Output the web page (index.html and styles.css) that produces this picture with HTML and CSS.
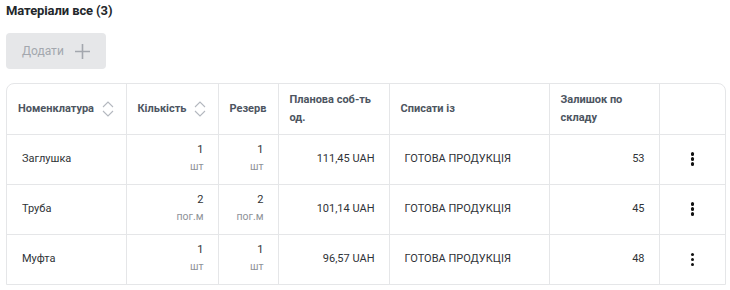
FILE: index.html
```html
<!DOCTYPE html>
<html lang="uk">
<head>
<meta charset="utf-8">
<link rel="stylesheet" href="styles.css">
</head>
<body>
<div class="page">
  <h2 class="title">Матеріали все (3)</h2>
  <button class="add-btn" disabled>
    <span>Додати</span>
    <svg width="17" height="17" viewBox="0 0 17 17"><path d="M8.5 1v15M1 8.5h15" stroke="#a3a7ae" stroke-width="1.6" fill="none"/></svg>
  </button>
  <div class="table-wrap">
    <table class="tbl">
      <colgroup>
        <col class="c1"><col class="c2"><col class="c3"><col class="c4"><col class="c5"><col class="c6"><col class="c7">
      </colgroup>
      <thead>
        <tr>
          <th><div class="th-sort">Номенклатура <svg class="sort" width="12" height="18" viewBox="0 0 12 18"><path d="M1 7l5-5 5 5M1 11l5 5 5-5" stroke="#b4b8bf" stroke-width="1.1" fill="none"/></svg></div></th>
          <th><div class="th-sort">Кількість <svg class="sort" width="12" height="18" viewBox="0 0 12 18"><path d="M1 7l5-5 5 5M1 11l5 5 5-5" stroke="#b4b8bf" stroke-width="1.1" fill="none"/></svg></div></th>
          <th>Резерв</th>
          <th>Планова соб-ть од.</th>
          <th>Списати із</th>
          <th>Залишок по складу</th>
          <th></th>
        </tr>
      </thead>
      <tbody>
        <tr>
          <td>Заглушка</td>
          <td class="num"><div>1</div><div class="unit">шт</div></td>
          <td class="num"><div>1</div><div class="unit">шт</div></td>
          <td class="num">111,45 UAH</td>
          <td class="src">ГОТОВА ПРОДУКЦІЯ</td>
          <td class="num">53</td>
          <td class="act"><span class="kebab"><i></i><i></i><i></i></span></td>
        </tr>
        <tr>
          <td>Труба</td>
          <td class="num"><div>2</div><div class="unit">пог.м</div></td>
          <td class="num"><div>2</div><div class="unit">пог.м</div></td>
          <td class="num">101,14 UAH</td>
          <td class="src">ГОТОВА ПРОДУКЦІЯ</td>
          <td class="num">45</td>
          <td class="act"><span class="kebab"><i></i><i></i><i></i></span></td>
        </tr>
        <tr>
          <td>Муфта</td>
          <td class="num"><div>1</div><div class="unit">шт</div></td>
          <td class="num"><div>1</div><div class="unit">шт</div></td>
          <td class="num">96,57 UAH</td>
          <td class="src">ГОТОВА ПРОДУКЦІЯ</td>
          <td class="num">48</td>
          <td class="act"><span class="kebab"><i></i><i></i><i></i></span></td>
        </tr>
      </tbody>
    </table>
  </div>
</div>
</body>
</html>
```
FILE: styles.css
```css
* { box-sizing: border-box; }
body {
  margin: 0;
  font-family: Roboto, "Noto Sans", sans-serif;
  color: #2b2f33;
  background: #fff;
}
.page {
  padding: 0 6px;
}
.title {
  margin: 0;
  font-size: 13px;
  font-weight: 700;
  line-height: 21px;
  color: #23272b;
  letter-spacing: -0.1px;
}
.add-btn {
  margin-top: 12px;
  width: 100px;
  height: 36px;
  border: none;
  border-radius: 4px;
  background: #e6e7e9;
  display: flex;
  align-items: center;
  padding: 0 0 0 16px;
  gap: 10px;
  font-family: inherit;
  font-size: 12px;
  color: #a3a7ae;
}
.table-wrap {
  margin-top: 14px;
  width: 720px;
  border: 1px solid #e5e6e8;
  border-radius: 8px 8px 0 0;
  overflow: hidden;
}
.tbl {
  width: 100%;
  border-collapse: collapse;
  table-layout: fixed;
  font-size: 11px;
}
.c1 { width: 119px; }
.c2 { width: 92px; }
.c3 { width: 60px; }
.c4 { width: 111px; }
.c5 { width: 160px; }
.c6 { width: 110px; }
.c7 { width: 66px; }
.tbl th, .tbl td {
  border-right: 1px solid #e5e6e8;
  border-bottom: 1px solid #e5e6e8;
}
.tbl tr > :last-child { border-right: none; }
.tbl tbody tr:last-child td { border-bottom: none; }
.tbl th {
  height: 50px;
  padding: 0 4px 0 11px;
  text-align: left;
  font-weight: 700;
  color: #4d5561;
  line-height: 18px;
}
.th-sort {
  display: flex;
  align-items: center;
  gap: 8px;
  white-space: nowrap;
}
.sort { flex: none; }
.tbl td {
  height: 50px;
  padding: 0 15px;
  color: #2f3337;
  line-height: 16px;
}
.tbl td.num { text-align: right; padding-right: 14px; }
.unit {
  font-size: 10.5px;
  color: #8e9298;
  line-height: 18px;
}
.tbl td.act { text-align: center; padding: 0; }
.kebab {
  display: inline-flex;
  flex-direction: column;
  gap: 1.5px;
  vertical-align: middle;
}
.kebab i {
  display: block;
  width: 3.5px;
  height: 3.5px;
  border-radius: 50%;
  background: #111;
}
```
